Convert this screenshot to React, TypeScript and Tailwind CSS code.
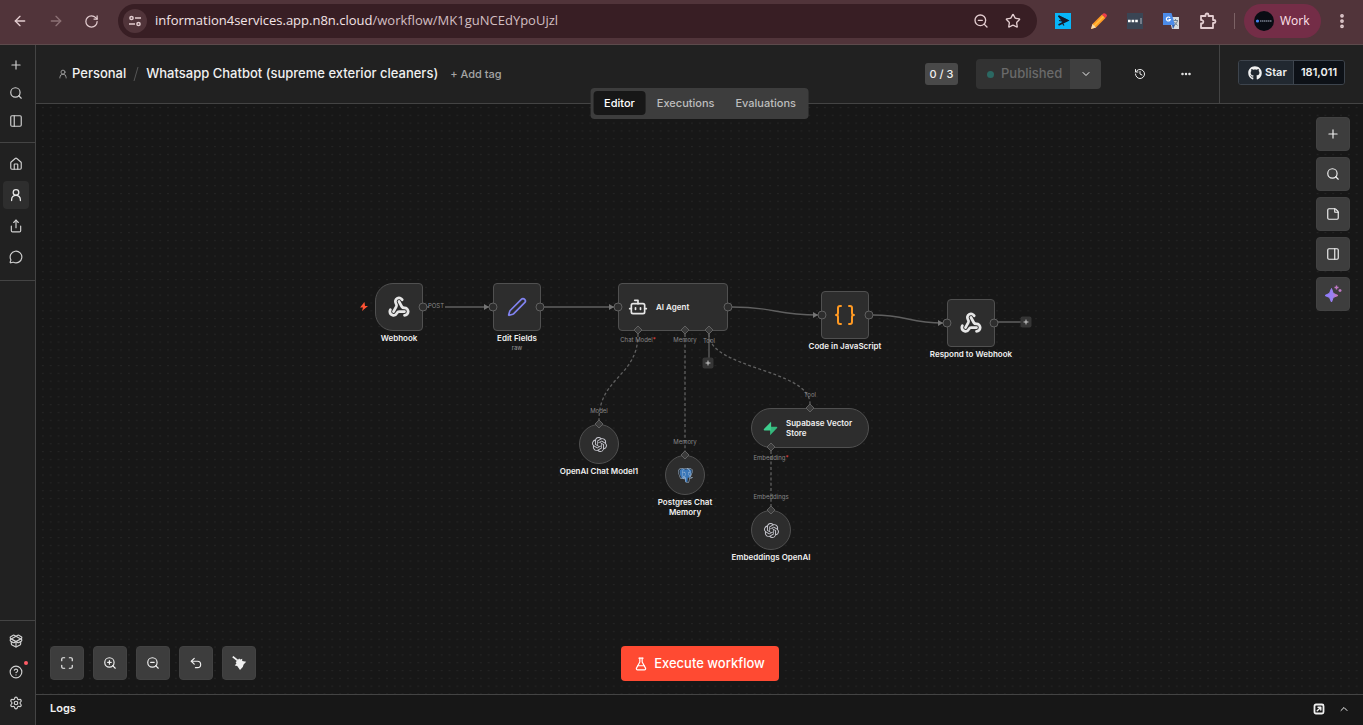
import type { ReactNode } from "react";
import {
  ArrowLeft,
  ArrowRight,
  Bot,
  Braces,
  ChevronDown,
  ChevronUp,
  CircleQuestionMark,
  Ellipsis,
  EllipsisVertical,
  FlaskConical,
  History,
  House,
  Maximize,
  MessageCircle,
  PackageOpen,
  PanelLeft,
  PanelRight,
  Pen,
  Plus,
  RotateCw,
  Search,
  Settings,
  Share,
  Star,
  StickyNote,
  Undo2,
  Webhook,
  ZoomIn,
  ZoomOut,
} from "lucide-react";
import { FaGithub } from "react-icons/fa";
import { SiOpenai, SiPostgresql } from "react-icons/si";

type WorkflowNode = {
  id: string;
  label: string;
  subtitle?: string;
  x: number;
  y: number;
  shape: string;
  labelClass?: string;
  inline?: boolean;
  icon: ReactNode;
};

const SQUARE = "h-12 w-12 rounded";
const CIRCLE = "h-10 w-10 rounded-full";

const NODES: WorkflowNode[] = [
  {
    id: "webhook",
    label: "Webhook",
    x: 339,
    y: 179,
    shape: "h-12 w-12 rounded-r rounded-l-[18px]",
    icon: <Webhook size={22} strokeWidth={3} className="text-[#e6e6e6]" />,
  },
  {
    id: "edit",
    label: "Edit Fields",
    subtitle: "raw",
    x: 457,
    y: 179,
    shape: SQUARE,
    icon: <Pen size={20} className="text-[#8183f0]" />,
  },
  {
    id: "agent",
    label: "AI Agent",
    x: 582,
    y: 179,
    shape: "h-12 w-[110px] rounded gap-2 pl-[9px]",
    inline: true,
    icon: <Bot size={20} className="shrink-0 text-[#e6e6e6]" />,
  },
  {
    id: "code",
    label: "Code in JavaScript",
    x: 785,
    y: 187,
    shape: SQUARE,
    icon: <Braces size={24} className="text-[#ff9922]" />,
  },
  {
    id: "respond",
    label: "Respond to Webhook",
    x: 911,
    y: 195,
    shape: SQUARE,
    icon: <Webhook size={22} strokeWidth={3} className="text-[#e6e6e6]" />,
  },
  {
    id: "model",
    label: "OpenAI Chat Model1",
    x: 543,
    y: 320,
    shape: CIRCLE,
    icon: <SiOpenai size={15} className="text-[#c8c8d0]" />,
  },
  {
    id: "memory",
    label: "Postgres Chat Memory",
    x: 629,
    y: 351,
    shape: CIRCLE,
    labelClass: "w-16",
    icon: <PostgresIcon />,
  },
  {
    id: "supabase",
    label: "Supabase Vector Store",
    x: 715,
    y: 304,
    shape: "h-10 w-[118px] rounded-full gap-2 pl-[11px]",
    inline: true,
    icon: <SupabaseIcon />,
  },
  {
    id: "embeddings",
    label: "Embeddings OpenAI",
    x: 715,
    y: 406,
    shape: CIRCLE,
    icon: <SiOpenai size={15} className="text-[#c8c8d0]" />,
  },
];

const PORTS = [
  [387, 203],
  [457, 203],
  [504, 203],
  [582, 203],
  [692, 203],
  [786, 211],
  [833, 211],
  [911, 219],
  [958, 219],
];

const DIAMONDS = [
  [602, 226],
  [649, 226],
  [673, 226],
  [563, 320],
  [649, 351],
  [774, 304],
  [735, 343],
  [735, 406],
];

const PORT_LABELS = [
  { text: "Chat Model", required: true, x: 602, y: 236 },
  { text: "Memory", x: 649, y: 236 },
  { text: "Tool", x: 673, y: 237 },
  { text: "Model", x: 563, y: 307 },
  { text: "Memory", x: 649, y: 338 },
  { text: "Tool", x: 774, y: 291 },
  { text: "Embedding", required: true, x: 735, y: 354 },
  { text: "Embeddings", x: 735, y: 393 },
  { text: "POST", x: 400, y: 202 },
];

const EDGES = [
  "M409 203H453",
  "M508 203H578",
  "M696 203C739 203 739 211 782 211",
  "M837 211C872 211 872 219 907 219",
];

const AI_EDGES = [
  "M602 230C602 273 563 273 563 316",
  "M649 230V347",
  "M673 230C673 265 774 265 774 300",
  "M735 347V402",
];

function PostgresIcon() {
  return (
    <span className="relative flex">
      <svg viewBox="0 0 16 16" className="absolute inset-0 h-[15px] w-[15px]">
        <path d="M2 2Q5 0 8 1.500 12 0 14.500 2.500 15 6 12.500 10l-2 .5-.5 4.500H8L7 11 4.500 11.500Q1 7 2 2z" fill="#3b77b8" />
      </svg>
      <SiPostgresql size={15} className="relative text-[#a4bdd8]" />
    </span>
  );
}

function SupabaseIcon() {
  return (
    <svg viewBox="0 0 16 16" className="h-[15px] w-[15px] shrink-0">
      <path d="M8.6 0.8 1 8.6c-.5.6-.2 1.4.6 1.4h7z" fill="#3ecf8e" />
      <path d="M7.6 15.2 15 7.4c.5-.6.2-1.4-.6-1.4H7.6z" fill="#35b87d" />
      <path d="M8.6 1v9H7.6V6z" fill="#3ecf8e" />
    </svg>
  );
}

function SparklesIcon() {
  return (
    <svg viewBox="0 0 18 18" className="h-[18px] w-[18px]">
      <defs>
        <linearGradient id="spark" x1="0" y1="0" x2="1" y2="0">
          <stop offset="0" stopColor="#8e7bff" />
          <stop offset="0.6" stopColor="#9a80f0" />
          <stop offset="1" stopColor="#d070b0" />
        </linearGradient>
      </defs>
      <path
        d="M7.500 3.500 9.200 8.300 14 10.500 9.200 12.500 7.500 17 5.500 12.500 1 10.500 5.500 8.300Z"
        fill="url(#spark)"
        stroke="url(#spark)"
        strokeLinejoin="round"
      />
      <path d="M12.500 0.500v4M10.500 2.500h4M16 4v3M14.500 5.500h3" stroke="#c078c4" strokeWidth="1.400" />
    </svg>
  );
}

function BroomIcon() {
  return (
    <svg viewBox="0 0 16 16" className="h-4 w-4" fill="currentColor">
      <path d="M1.200 2.200 2.400 1 7.400 4.900 6.200 6.300z" />
      <path d="M4.600 7.200 8.200 3.600 9.200 4.600 11.200 3.800 11.200 6 15.200 6.800 12.600 9.600 11.800 12 9 15 6.200 11 3.800 10.400 5.500 8.300z" />
    </svg>
  );
}

function PopOutIcon() {
  return (
    <svg viewBox="0 0 12 12" className="h-3 w-3" fill="none" stroke="currentColor" strokeLinecap="round" strokeLinejoin="round">
      <rect x="1.500" y="1.500" width="9" height="9" rx="1.500" strokeWidth="1.800" />
      <path d="M4.200 7.800 7.600 4.400M5 4.200h2.800V7" strokeWidth="1.400" />
    </svg>
  );
}

function PersonIcon({ size }: { size: number }) {
  return (
    <svg width={size} height={size} viewBox="0 0 24 24" fill="none" stroke="currentColor" strokeWidth="2.200" strokeLinecap="round">
      <circle cx="12" cy="7.500" r="4.800" />
      <path d="M4.500 21.500v-1.500a7.500 7.500 0 0 1 15 0v1.500" />
    </svg>
  );
}

function BrowserBar() {
  return (
    <div className="flex h-[45px] shrink-0 items-center border-b border-[#5d4a4c] bg-[#51343a] pb-[2px] font-['Open_Sans','Noto_Sans',sans-serif] text-[#e3cdd0]">
      <div className="flex w-[118px] items-center gap-5 pl-3">
        <button type="button" aria-label="Back"><ArrowLeft size={16} /></button>
        <button type="button" aria-label="Forward" className="text-[#8c7175]"><ArrowRight size={16} /></button>
        <button type="button" aria-label="Reload"><RotateCw size={15} /></button>
      </div>
      <div className="flex h-[34px] flex-1 items-center rounded-full bg-[#381e24] pl-[5px] pr-4">
        <button
          type="button"
          aria-label="Site information"
          className="flex h-6 w-6 items-center justify-center rounded-full bg-[#51343a]"
        >
          <svg viewBox="0 0 14 14" className="h-3.5 w-3.5" fill="none" stroke="currentColor" strokeWidth="1.500">
            <circle cx="3.500" cy="4" r="1.600" />
            <path d="M7 4h6M1 10h6" />
            <circle cx="10.500" cy="10" r="1.600" />
          </svg>
        </button>
        <div className="ml-2 flex-1 text-[13px]">
          <span className="text-[#f3e4e6]">information4services.app.n8n.cloud</span>
          <span className="text-[#d3bfc2]">/workflow/MK1guNCEdYpoUjzl</span>
        </div>
        <div className="flex gap-4">
          <button type="button" aria-label="Zoom"><ZoomOut size={16} /></button>
          <button type="button" aria-label="Bookmark"><Star size={16} /></button>
        </div>
      </div>
      <div className="flex items-center gap-5 pl-[18px]">
        <svg viewBox="0 0 16 16" className="h-4 w-4">
          <path d="M0 0h16v16H0z" fill="#08b5f8" />
          <path d="M3.500 3 12.500 7.500 3.500 12" stroke="#161b2b" strokeWidth="1.800" fill="none" />
          <path d="M3.500 3 12.500 7.500 8 9zM4 7.500 9 8.500M7 9.500 9 12.500" stroke="#161b2b" strokeWidth="1.200" fill="#161b2b" />
        </svg>
        <svg viewBox="0 0 16 16" className="h-4 w-4">
          <path d="M0 16 1.500 11 11 1.500 14.500 5 5 14.500z" fill="#ff9a26" />
          <path d="M3 13 12.500 3.500" stroke="#ffc23e" strokeWidth="1.500" />
          <path d="M11 1.500Q13 -.5 15 1T14.500 5z" fill="#ee3d4a" />
          <path d="M0 16 1.500 11 5 14.500z" fill="#f5ddb0" />
        </svg>
        <svg viewBox="0 0 16 16" className="h-4 w-4">
          <path d="M0 0h16v16H0z" fill="#3a4554" />
          <path d="M1 8h10" stroke="#fff" strokeWidth="2.600" strokeDasharray="2.600 1" />
          <path d="M14 5v6" stroke="#aeb6c0" />
        </svg>
        <svg viewBox="0 0 16 16" className="h-4 w-4">
          <path d="M6 4h10v12H9z" fill="#d8dbdc" />
          <path d="M0 0h8.500L12 12H0z" fill="#4c8be8" />
          <path d="M9 12h3l-2 4z" fill="#2e5fb0" />
          <path d="M10.500 7.500h4.500M12.500 6v1.500M14.500 8q-1 3-3.500 4.500M11.500 9l3 3.500" stroke="#6f8291" fill="none" />
          <path d="M7 4.800A2 2 0 1 0 7.300 6.600H5.500" stroke="#fff" strokeWidth="1.200" fill="none" />
        </svg>
        <svg viewBox="0 0 18 18" className="h-[18px] w-[18px]" fill="none" stroke="currentColor" strokeWidth="1.800" strokeLinejoin="round">
          <path d="M2 4h4.500V3a1.500 1.500 0 0 1 3 0v1H14v4h1a1.500 1.500 0 0 1 0 3h-1v5H2v-4.500h1a1.800 1.800 0 0 0 0-3.500H2z" />
        </svg>
      </div>
      <div className="ml-[17px] h-4 w-px bg-[#7c6265]" />
      <button
        type="button"
        className="ml-[9px] flex h-[34px] w-[77px] items-center gap-1.5 rounded-full bg-[#742d47] pl-2.5 text-xs text-[#ffe3ea]"
      >
        <svg viewBox="0 0 20 20" className="h-5 w-5 shrink-0">
          <circle cx="10" cy="10" r="10" fill="#090c13" />
          <circle cx="3.500" cy="10" r="1.600" fill="#4583f5" />
          <path d="M6 10h12" stroke="#aab4c8" strokeWidth="1.200" strokeDasharray="1.500 .5" />
        </svg>
        Work
      </button>
      <button type="button" aria-label="Menu" className="mx-3"><EllipsisVertical size={18} strokeWidth={3} /></button>
    </div>
  );
}

function SideButton({ label, active, children }: { label: string; active?: boolean; children: ReactNode }) {
  return (
    <button
      type="button"
      aria-label={label}
      className={
        active
          ? "relative flex h-7 w-[26px] items-center justify-center rounded bg-[#2e2e2e] text-[#e6e6e6]"
          : "relative flex h-7 w-[26px] items-center justify-center rounded text-[#d0d0d0]"
      }
    >
      {children}
    </button>
  );
}

function Sidebar() {
  return (
    <nav className="flex w-9 shrink-0 flex-col border-r border-[#444444] bg-[#212121]">
      <div className="flex flex-col border-b border-[#444444] pb-[7px] pl-[3px] pt-1.5">
        <SideButton label="Create"><Plus size={14} /></SideButton>
        <SideButton label="Search"><Search size={14} /></SideButton>
        <SideButton label="Toggle sidebar"><PanelLeft size={14} /></SideButton>
      </div>
      <div className="flex flex-col gap-[3px] border-b border-[#444444] pb-[9px] pl-[3px] pt-[7px]">
        <SideButton label="Overview"><House size={14} /></SideButton>
        <SideButton label="Personal" active><PersonIcon size={14} /></SideButton>
        <SideButton label="Shared"><Share size={14} /></SideButton>
        <SideButton label="Chat"><MessageCircle size={14} /></SideButton>
      </div>
      <div className="mt-auto flex flex-col gap-[3px] border-t border-[#444444] pb-2 pl-[3px] pt-1.5">
        <SideButton label="Templates"><PackageOpen size={14} /></SideButton>
        <SideButton label="Help">
          <CircleQuestionMark size={14} />
          <span className="absolute right-px top-[3px] h-1 w-1 rounded-full bg-[#ff5c66]" />
        </SideButton>
        <SideButton label="Settings"><Settings size={14} /></SideButton>
      </div>
    </nav>
  );
}

function Header() {
  return (
    <header className="relative flex h-[59px] shrink-0 items-center border-b border-[#444444] bg-[#212121] text-[#f0f0f0]">
      <div className="flex flex-1 items-center pl-[22px] text-[13px] font-medium">
        <span className="text-[#a0a0a0]"><PersonIcon size={10} /></span>
        <a href="#personal" className="ml-1">Personal</a>
        <svg viewBox="0 0 6 16" className="mx-[7px] h-4 w-1.5"><path d="M5 1 1 15" stroke="#555" /></svg>
        <h1>Whatsapp Chatbot (supreme exterior cleaners)</h1>
        <button type="button" className="ml-3 text-[11px] text-[#a5a5a5]">+ Add tag</button>
      </div>
      <span className="flex h-[22px] w-[33px] items-center justify-center rounded-[3px] bg-[#494949] text-[11px] font-medium">
        0 / 3
      </span>
      <div className="ml-[18px] flex h-[30px] overflow-hidden rounded text-[13px] font-medium">
        <button type="button" disabled className="flex w-[94px] items-center gap-[7px] bg-[#323232] pl-[11px] text-[#6a6a6a]">
          <span className="h-[7px] w-[7px] rounded-full bg-[#2b6862]" />
          Published
        </button>
        <button type="button" aria-label="Publish options" className="flex w-[31px] items-center justify-center bg-[#3f3f3f]">
          <ChevronDown size={12} />
        </button>
      </div>
      <button type="button" aria-label="History" className="ml-[33px]"><History size={12} /></button>
      <button type="button" aria-label="More" className="ml-[34px] mr-[27px]"><Ellipsis size={12} strokeWidth={3} /></button>
      <div className="flex h-full items-center border-l border-[#444444] px-[18px] pb-[3px]">
        <div className="flex h-[25px] overflow-hidden rounded-[3px] border border-[#3d444d] text-[11px] font-semibold">
          <a href="#star" className="flex w-[55px] items-center gap-[3px] border-r border-[#3d444d] bg-[#212830] pl-[9px]">
            <FaGithub size={14} />
            Star
          </a>
          <a href="#stargazers" className="flex w-[50px] items-center justify-center bg-[#0d1117]">181,011</a>
        </div>
      </div>
      <div className="absolute left-1/2 top-[43px] z-10 flex h-[31px] -translate-x-1/2 rounded bg-[#3d3d3d] p-[3px] pb-1 text-[11px] font-medium text-[#bdbdbd]">
        <button type="button" className="rounded bg-[#171717] px-[11px] text-white">Editor</button>
        <button type="button" className="px-[11px]">Executions</button>
        <button type="button" className="px-2.5">Evaluations</button>
      </div>
    </header>
  );
}

function NodeCard({ node }: { node: WorkflowNode }) {
  return (
    <div className="absolute text-[8px] font-semibold leading-[10px] text-[#f0f0f0]" style={{ left: node.x, top: node.y }}>
      <div
        className={`flex items-center border border-[#505050] bg-[#2d2d2d] ${node.shape} ${node.inline ? "" : "justify-center"}`}
      >
        {node.icon}
        {node.inline && <span className="max-w-[76px]">{node.label}</span>}
      </div>
      {!node.inline && (
        <div className="absolute left-1/2 top-full mt-0.5 -translate-x-1/2 text-center">
          <div className={node.labelClass ?? "whitespace-nowrap"}>{node.label}</div>
          {node.subtitle && <div className="text-[6px] font-normal text-[#9a9a9a]">{node.subtitle}</div>}
        </div>
      )}
    </div>
  );
}

function Diagram() {
  return (
    <>
      <svg className="absolute inset-0 h-full w-full">
        <defs>
          <pattern id="dots" x="3" y="0" width="7.820" height="7.820" patternUnits="userSpaceOnUse">
            <rect x="3.400" y="3" width="1" height="1" fill="#303030" />
          </pattern>
        </defs>
        <rect width="100%" height="100%" fill="url(#dots)" />
      </svg>
      {NODES.map((node) => (
        <NodeCard key={node.id} node={node} />
      ))}
      <svg className="absolute inset-0 h-full w-full" fill="none" stroke="#606060">
        <defs>
          <marker id="arrow" markerWidth="6" markerHeight="6" refX="5" refY="3" orient="auto" markerUnits="userSpaceOnUse">
            <path d="M0 0 5 3 0 6z" fill="#747474" stroke="none" />
          </marker>
        </defs>
        {EDGES.map((d) => <path key={d} d={d} strokeWidth="1.300" markerEnd="url(#arrow)" />)}
        {AI_EDGES.map((d) => <path key={d} d={d} strokeWidth="1.300" strokeDasharray="3 2.300" />)}
        <path d="M391 203h2M673 230v24M962 218h23" strokeWidth="1.300" />
        {PORTS.map(([x, y]) => (
          <circle key={`${x}-${y}`} cx={x} cy={y} r="4" fill="#2d2d2d" />
        ))}
        {DIAMONDS.map(([x, y]) => (
          <path key={`${x}-${y}`} d={`M${x} ${y - 4}l4 4-4 4-4-4z`} fill="#3a3a3a" />
        ))}
        {/* Trigger bolt */}
        <path d="M328.500 198l-4.500 5.500h3l-1 3.500 6-5h-3z" fill="#ff5233" stroke="none" />
      </svg>
      {PORT_LABELS.map((l) => (
        <span
          key={`${l.x}-${l.y}`}
          className="absolute -translate-x-1/2 -translate-y-1/2 whitespace-nowrap text-[6px] leading-[8px] text-[#888888]"
          style={{ left: l.x, top: l.y }}
        >
          {l.text}
          {l.required && <span className="text-[#ff4a4a]">*</span>}
        </span>
      ))}
      <AddHandle x={672} y={259} />
      <AddHandle x={990} y={218} />
    </>
  );
}

function AddHandle({ x, y }: { x: number; y: number }) {
  return (
    <button
      type="button"
      aria-label="Add node"
      className="absolute flex h-[11px] w-[11px] -translate-x-1/2 -translate-y-1/2 items-center justify-center rounded-[2px] bg-[#353535] text-[#dddddd]"
      style={{ left: x, top: y }}
    >
      <Plus size={7} strokeWidth={3} />
    </button>
  );
}

function CanvasButton({ label, children }: { label: string; children: ReactNode }) {
  return (
    <button
      type="button"
      aria-label={label}
      className="flex h-[34px] w-[34px] items-center justify-center rounded border border-[#424242] bg-[#3d3d3d] text-[#f0f0f0]"
    >
      {children}
    </button>
  );
}

function Canvas() {
  return (
    <main className="relative min-h-[480px] flex-1 overflow-hidden bg-[#171717]">
      <Diagram />
      <div className="absolute right-[13px] top-[13px] flex flex-col gap-1.5">
        <CanvasButton label="Add node"><Plus size={14} /></CanvasButton>
        <CanvasButton label="Search nodes"><Search size={14} /></CanvasButton>
        <CanvasButton label="Add sticky note"><StickyNote size={14} /></CanvasButton>
        <CanvasButton label="Toggle panel"><PanelRight size={14} /></CanvasButton>
        <CanvasButton label="Ask assistant"><SparklesIcon /></CanvasButton>
      </div>
      <div className="absolute bottom-3.5 left-3.5 flex gap-[9px]">
        <CanvasButton label="Fit view"><Maximize size={14} /></CanvasButton>
        <CanvasButton label="Zoom in"><ZoomIn size={14} /></CanvasButton>
        <CanvasButton label="Zoom out"><ZoomOut size={14} /></CanvasButton>
        <CanvasButton label="Reset zoom"><Undo2 size={14} /></CanvasButton>
        <CanvasButton label="Tidy up"><BroomIcon /></CanvasButton>
      </div>
      <button
        type="button"
        className="absolute bottom-[13px] left-1/2 flex h-[35px] w-[158px] -translate-x-1/2 items-center justify-center gap-1.5 rounded bg-[#ff4a32] text-[13px] font-medium text-white"
      >
        <FlaskConical size={14} />
        Execute workflow
      </button>
    </main>
  );
}

export default function App() {
  return (
    <div className="flex min-h-screen flex-col bg-[#171717] font-['Inter',sans-serif]">
      <BrowserBar />
      <div className="flex flex-1">
        <Sidebar />
        <div className="flex min-w-0 flex-1 flex-col">
          <Header />
          <Canvas />
          <footer className="flex h-[31px] shrink-0 items-center border-t border-[#444444] pb-[3px] pl-3.5 pr-[13px] text-[#f0f0f0]">
            <h2 className="flex-1 text-[11px] font-semibold">Logs</h2>
            <button type="button" aria-label="Pop out logs"><PopOutIcon /></button>
            <button type="button" aria-label="Open logs" className="ml-[13px]"><ChevronUp size={12} /></button>
          </footer>
        </div>
      </div>
    </div>
  );
}
